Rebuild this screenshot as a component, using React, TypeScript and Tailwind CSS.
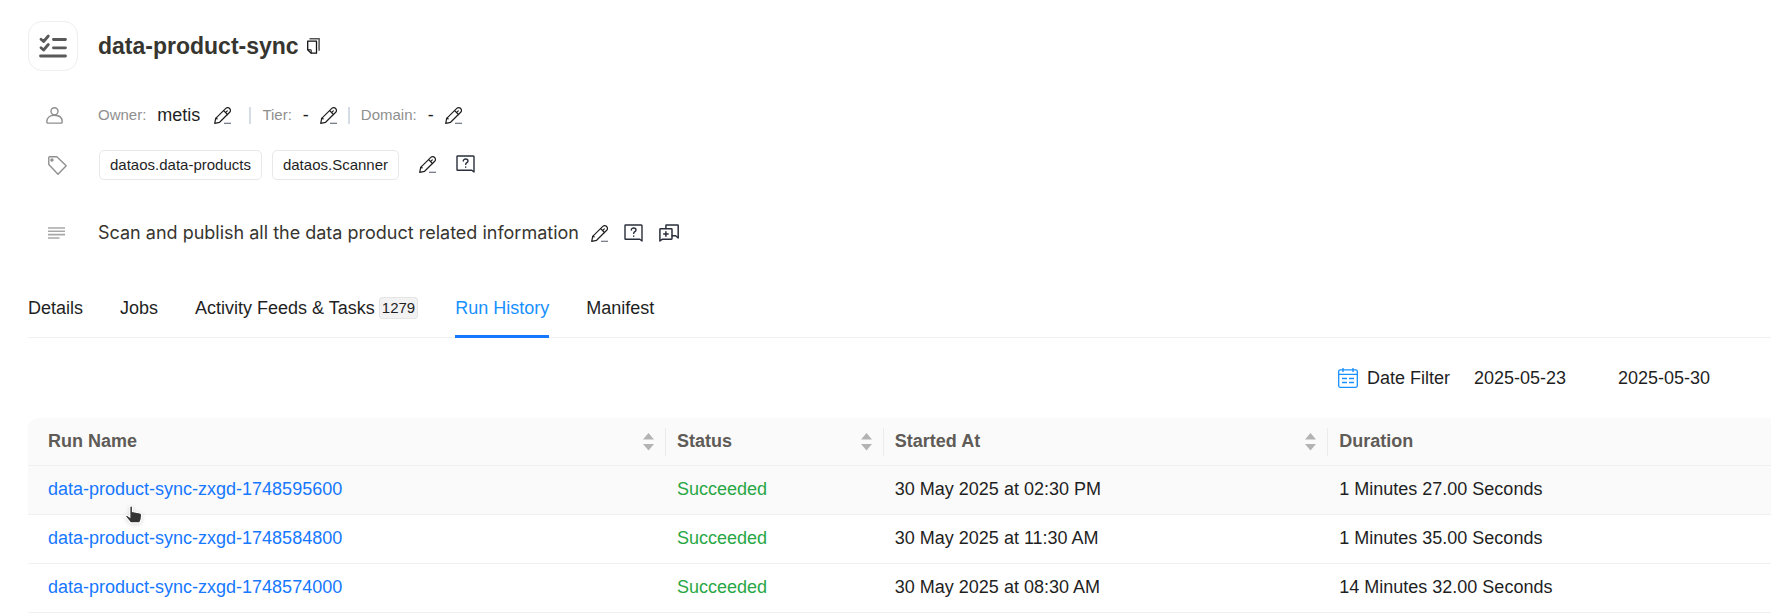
import type { ReactNode } from "react";

function ChecklistIcon() {
  return (
    <svg width="28" height="24" viewBox="0 0 28 24" fill="none" stroke="#595959" strokeWidth="2.8" strokeLinecap="round" strokeLinejoin="round" aria-hidden="true">
      <path d="M2 5.200l2.600 2.300L9.300 2M2 13.700l2.600 2.300 4.700-5.500M14.400 5.500h12.100M14.400 13.800h12.100M1.500 22h25" />
    </svg>
  );
}

function CopyIcon() {
  return (
    <svg width="13" height="16" viewBox="0 0 13 16" fill="none" aria-hidden="true">
      <path d="M2.5 .7h9.6v12" stroke="#555" strokeWidth="1.5" />
      <path d="M.7 3.2h8.8v12H4.2L.7 11.8z" stroke="#111" strokeWidth="1.3" strokeLinejoin="round" />
      <path d="M.7 11.8h3.5v3.4" stroke="#111" strokeWidth="1" />
    </svg>
  );
}

function PencilIcon() {
  return (
    <svg width="17" height="17" viewBox="0 0 17 17" fill="none" stroke="#1f1f1f" strokeWidth="1.2" strokeLinecap="round" strokeLinejoin="round" aria-hidden="true">
      <path d="M.7 16.3L1.7 11.4 11.8 1.400a2.600 2.600 0 0 1 3.800.1 2.600 2.600 0 0 1 .1 3.800L5.600 15.300z" />
      <path d="M9.600 3.600l3.900 3.900M11.800 5.300l1.500-1.500M1.700 11.400l1.500.4" />
      <path d="M10 16.300h7" stroke="#6b7280" strokeLinecap="butt" />
    </svg>
  );
}

function QuestionIcon() {
  return (
    <svg width="19" height="18" viewBox="0 0 19 18" fill="none" stroke="#292f3a" strokeWidth="1.4" strokeLinecap="round" strokeLinejoin="round" aria-hidden="true">
      <path d="M1.600 1h15.800a.6.6 0 0 1 .6.6V17l-2.200-1.700H1.600a.6.6 0 0 1-.6-.6V1.600a.6.6 0 0 1 .6-.6z" />
      <path d="M7.300 6c0-2.800 4.700-2.700 4.700 0 0 1.700-2.300 1.600-2.300 3.400M9.700 12v.2" />
    </svg>
  );
}

function ThreadIcon() {
  return (
    <svg width="20" height="18" viewBox="0 0 20 18" fill="none" stroke="#292f3a" strokeWidth="1.5" strokeLinecap="round" strokeLinejoin="round" aria-hidden="true">
      <path d="M1.600 4.800h10.800a.6.6 0 0 1 .6.6v9.200a.6.6 0 0 1-.6.6H3.400L.9 17V5.400a.7.7 0 0 1 .7-.6z" />
      <path d="M6.900 4.400V1.600a.6.6 0 0 1 .6-.6h11.100a.6.6 0 0 1 .6.6V14l-2.600-2.300h-3.400M6.900 7.800v4.400M4.700 10h4.400" />
    </svg>
  );
}

function UserIcon() {
  return (
    <svg width="17" height="17" viewBox="0 0 17 17" fill="none" stroke="#8f8f8f" strokeWidth="1.4" strokeLinejoin="round" aria-hidden="true">
      <circle cx="8.500" cy="4.200" r="3.500" />
      <path d="M.8 14.800c0-4.200 3-6.500 7.700-6.500s7.700 2.300 7.700 6.500a1.200 1.200 0 0 1-1.200 1.300H2a1.200 1.200 0 0 1-1.200-1.300z" />
    </svg>
  );
}

function TagIcon() {
  return (
    <svg width="19" height="19" viewBox="0 0 19 19" fill="none" stroke="#8f8f8f" strokeWidth="1.4" strokeLinejoin="round" aria-hidden="true">
      <path d="M.8 1.600a.8.8 0 0 1 .8-.8h7.200l9.400 9-8.200 8.400L.8 8.600z" />
      <circle cx="4" cy="4" r="1" />
    </svg>
  );
}

function LinesIcon() {
  return (
    <svg width="17" height="12" viewBox="0 0 17 12" stroke="#a8a8a8" strokeWidth="1.6" aria-hidden="true">
      <path d="M0 1h17M0 4.300h17M0 7.600h17M0 11h11.500" />
    </svg>
  );
}

function CalendarIcon() {
  return (
    <svg width="20" height="20" viewBox="0 0 20 20" fill="none" stroke="#1890ff" strokeWidth="1.3" aria-hidden="true">
      <rect x=".7" y="1.800" width="18.600" height="17.500" rx="1.500" />
      <path d="M.7 6.400h18.600M5 0v4M15 0v4M4 10.500h5M11 10.500h5M4 14.500h5M11 14.500h5" />
    </svg>
  );
}

function HandCursor() {
  return (
    <svg className="pointer-events-none absolute left-[97px] top-[39px] drop-shadow-sm" width="18" height="20" viewBox="0 0 18 20" aria-hidden="true">
      <path d="M4.800 2.200c0-1.600 2.700-1.600 2.700 0v4.300l7.400 1.500c1.300.3 1.800 1.100 1.700 2.300l-.5 4.300-1.300 3.200H5.600L1 12.200c-.9-1.200.4-2.500 1.600-1.700l2.200 1.500z" fill="#333" stroke="#fff" strokeWidth="1.200" />
    </svg>
  );
}

function Sorter({ label }: { label: string }) {
  return (
    <button type="button" aria-label={label} className="cursor-pointer">
      <svg width="11" height="18" viewBox="0 0 11 18" fill="#b3b3b3" aria-hidden="true">
        <path d="M5.500 0L11 6.500H0zM0 11h11l-5.500 6.500z" />
      </svg>
    </button>
  );
}

function IconButton({ label, children }: { label: string; children: ReactNode }) {
  return (
    <button type="button" aria-label={label} className="shrink-0 cursor-pointer">
      {children}
    </button>
  );
}

function Divider() {
  return <span className="h-[17px] w-[2px] bg-[#d5dce6]" />;
}

const tabs = [
  { name: "Details" },
  { name: "Jobs" },
  { name: "Activity Feeds & Tasks", count: 1279 },
  { name: "Run History", active: true },
  { name: "Manifest" },
];

const columns = [
  { name: "Run Name", width: "w-[36.6%]", pad: "pl-5 pr-[11px]" },
  { name: "Status", width: "w-[12.5%]", pad: "px-[11px]" },
  { name: "Started At", width: "w-[25.5%]", pad: "px-[11px]" },
  { name: "Duration", width: "", pad: "px-[11px]" },
];

const runs = [
  { id: "data-product-sync-zxgd-1748595600", start: "30 May 2025 at 02:30 PM", duration: "1 Minutes 27.00 Seconds" },
  { id: "data-product-sync-zxgd-1748584800", start: "30 May 2025 at 11:30 AM", duration: "1 Minutes 35.00 Seconds" },
  { id: "data-product-sync-zxgd-1748574000", start: "30 May 2025 at 08:30 AM", duration: "14 Minutes 32.00 Seconds" },
];

const cell = "border-b border-[#f0f0f0] px-[11px] pb-[3px]";

export default function App() {
  return (
    <main className="bg-white pl-7 pt-[21px] font-['Liberation_Sans',Arial,sans-serif] text-[18px] leading-6 text-[#1f1f1f]">
      <header className="flex items-center gap-5">
        <span className="flex size-[50px] items-center justify-center rounded-[14px] border border-[#eee]"><ChecklistIcon /></span>
        <div className="flex items-center gap-2">
          <h1 className="text-[23px] font-bold leading-8 text-[#37352f]">data-product-sync</h1>
          <IconButton label="Copy name"><CopyIcon /></IconButton>
        </div>
      </header>

      <section className="mt-8 flex h-6 items-center">
        <span className="w-[70px] pl-[18px]"><UserIcon /></span>
        <div className="flex items-center gap-[11px]">
          <span className="text-[15px] text-[#8f8f8f]">Owner:</span>
          <span>metis</span>
          <span className="ml-[3px] mr-[7px] flex"><IconButton label="Edit owner"><PencilIcon /></IconButton></span>
          <Divider />
          <span className="text-[15px] text-[#8f8f8f]">Tier:</span>
          <span>-</span>
          <IconButton label="Edit tier"><PencilIcon /></IconButton>
          <Divider />
          <span className="text-[15px] text-[#8f8f8f]">Domain:</span>
          <span>-</span>
          <IconButton label="Edit domain"><PencilIcon /></IconButton>
        </div>
      </section>

      <section className="mt-[23px] flex items-center">
        <span className="w-[71px] pl-5"><TagIcon /></span>
        <ul className="flex gap-[10px] text-[15px] leading-7">
          <li className="rounded-[5px] border border-[#e8e8e8] px-[10px]">dataos.data-products</li>
          <li className="rounded-[5px] border border-[#e8e8e8] px-[10px]">dataos.Scanner</li>
        </ul>
        <div className="ml-5 flex items-center gap-5 pb-[2px]">
          <IconButton label="Edit tags"><PencilIcon /></IconButton>
          <IconButton label="Request tags update"><QuestionIcon /></IconButton>
        </div>
      </section>

      <section className="mt-10 flex items-center">
        <span className="w-[70px] pl-5"><LinesIcon /></span>
        <p className="font-['Inter',sans-serif] leading-[26px] text-[#37352f]">Scan and publish all the data product related information</p>
        <div className="ml-3 flex items-center gap-4">
          <IconButton label="Edit description"><PencilIcon /></IconButton>
          <IconButton label="Request description update"><QuestionIcon /></IconButton>
          <IconButton label="Start conversation"><ThreadIcon /></IconButton>
        </div>
      </section>

      <nav className="mt-[35px] flex gap-[37px] border-b border-[#f0f0f0]">
        {tabs.map((tab) => (
          <a
            key={tab.name}
            href="#"
            className={
              tab.active
                ? "-mb-px flex items-center gap-1 border-b-3 border-[#1677ff] pb-[15px] pt-[15px] text-[#1890ff]"
                : "-mb-px flex items-center gap-1 border-b-3 border-transparent pb-[15px] pt-[15px]"
            }
          >
            {tab.name}
            {tab.count && (
              <span className="-my-px rounded-[3px] border border-[#e5e5e5] bg-[#f2f2f2] px-[2px] text-[15px] leading-5">{tab.count}</span>
            )}
          </a>
        ))}
      </nav>

      <div className="flex items-center justify-end pb-7 pr-2 pt-7">
        <CalendarIcon />
        <span className="ml-[9px]">Date Filter</span>
        <input aria-label="Start date" defaultValue="2025-05-23" className="ml-6 w-[120px] outline-none" />
        <input aria-label="End date" defaultValue="2025-05-30" className="ml-6 w-[145px] outline-none" />
      </div>

      <div className="relative">
        <table className="w-full table-fixed border-separate border-spacing-0 text-left">
          <thead>
            <tr className="h-12">
              {columns.map((col, i) => (
                <th
                  key={col.name}
                  scope="col"
                  className={`${col.width} border-b border-[#f0f0f0] bg-[#fafafa] p-0 font-bold text-[#5f5b57] first:rounded-tl-[10px]`}
                >
                  <div className={`flex h-7 items-center justify-between ${col.pad} ${i < 3 ? "border-r border-[#ececec]" : ""}`}>
                    <span className="pb-[2px]">{col.name}</span>
                    {i < 3 && <Sorter label={`Sort by ${col.name}`} />}
                  </div>
                </th>
              ))}
            </tr>
          </thead>
          <tbody>
            {runs.map((run) => (
              <tr key={run.id} className="h-[49px] first:bg-[#fafafa]">
                <td className="relative border-b border-[#f0f0f0] pb-[3px] pl-5">
                  <a href="#" className="text-[#1677ff]">{run.id}</a>
                  {run === runs[0] && <HandCursor />}
                </td>
                <td className={`${cell} text-[#28a745]`}>Succeeded</td>
                <td className={cell}>{run.start}</td>
                <td className={cell}>{run.duration}</td>
              </tr>
            ))}
          </tbody>
        </table>
      </div>
    </main>
  );
}
